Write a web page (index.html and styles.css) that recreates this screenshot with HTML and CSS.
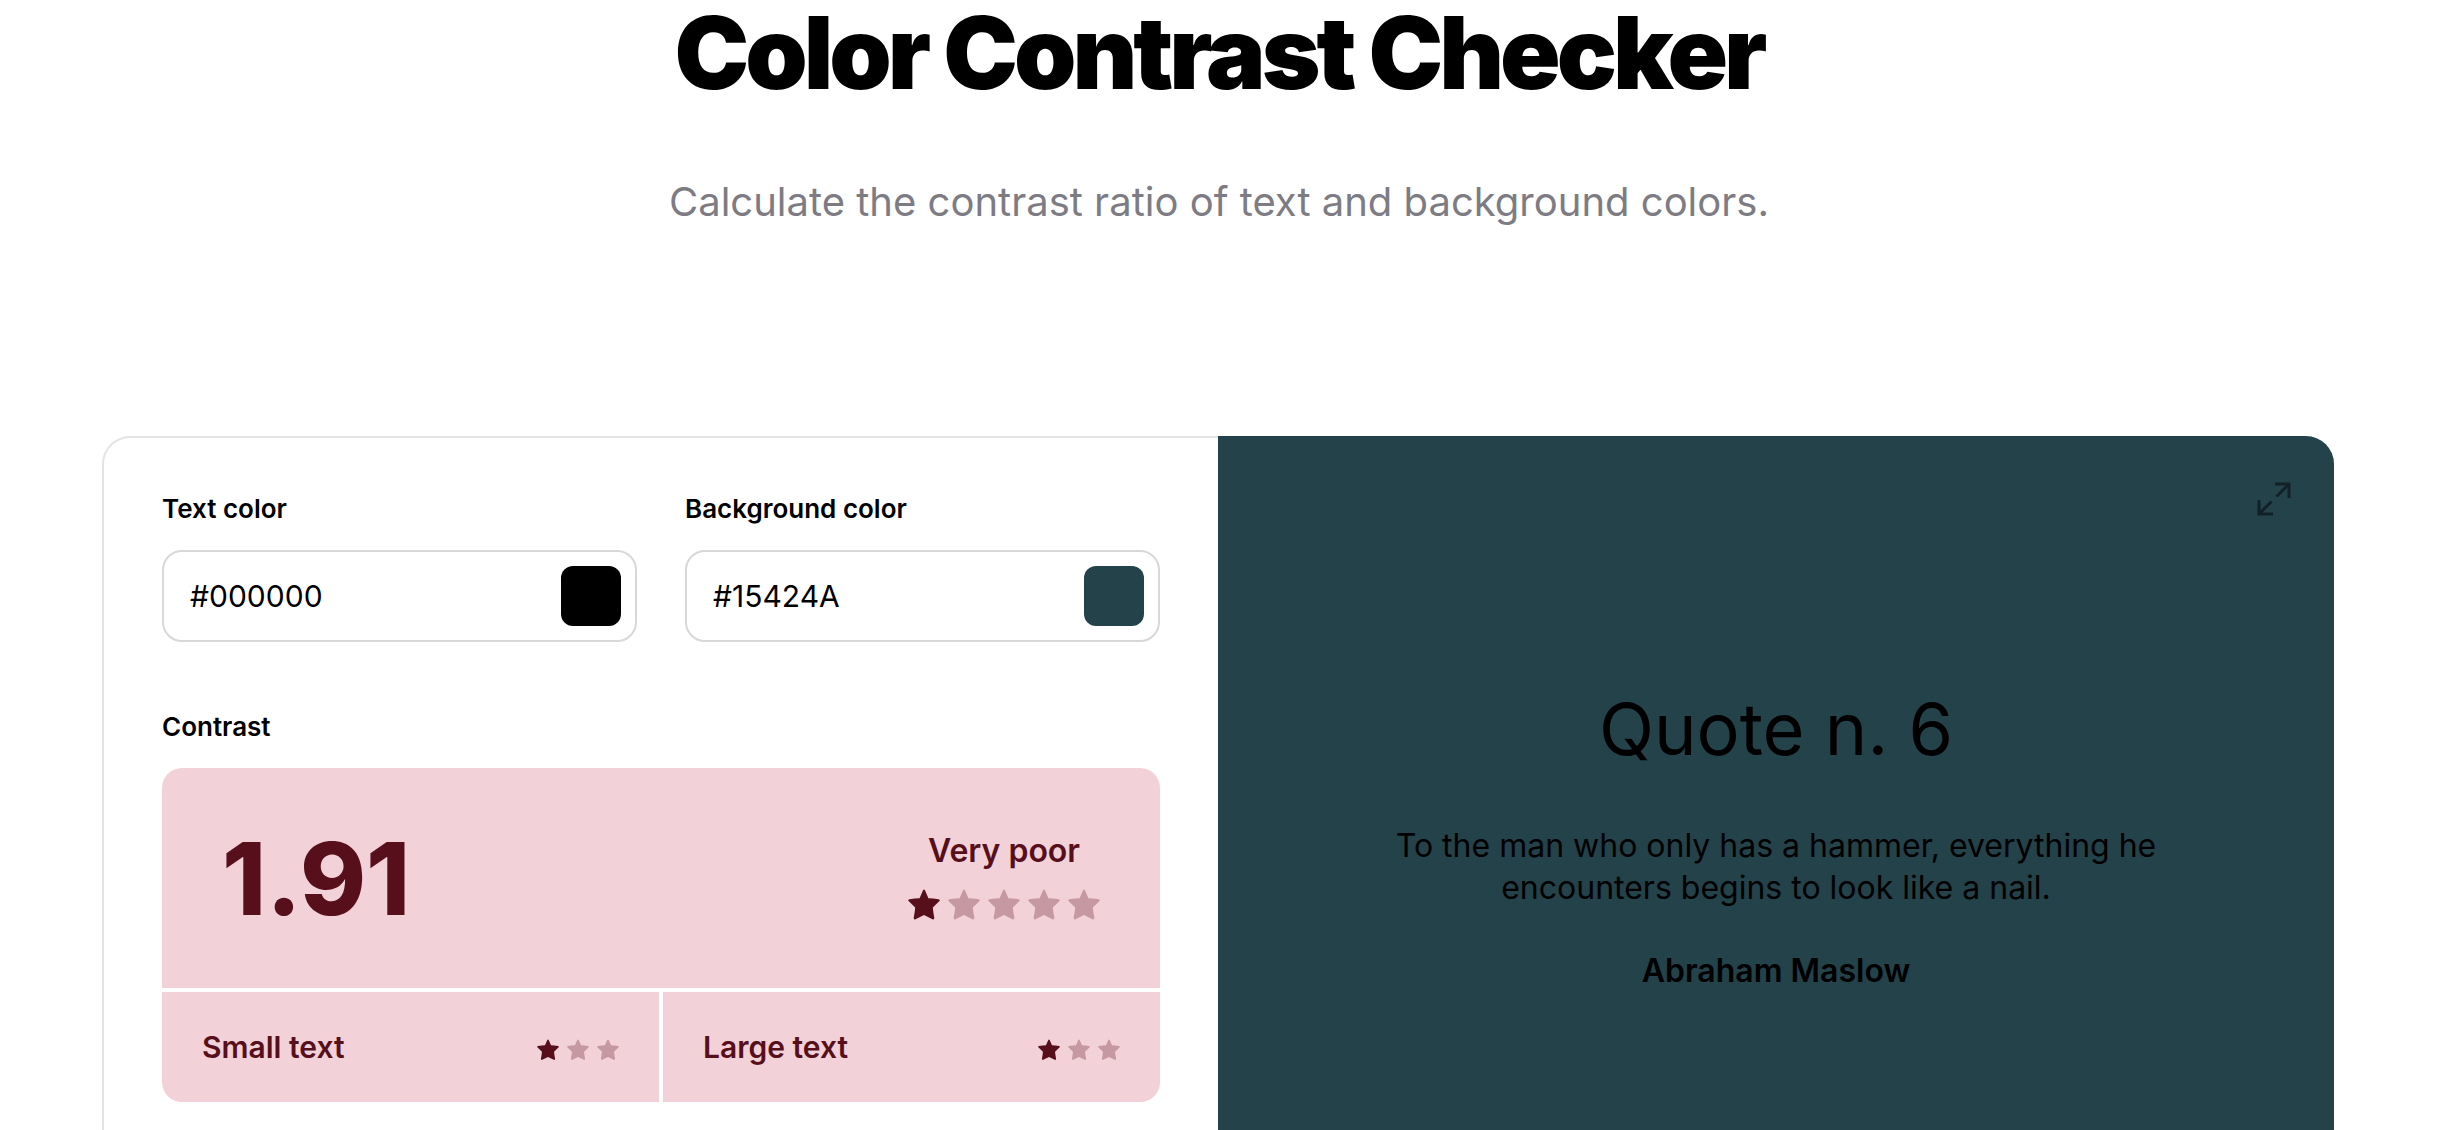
FILE: index.html
```html
<!DOCTYPE html>
<html lang="en">
<head>
    <meta charset="UTF-8">
    <meta name="viewport" content="width=device-width, initial-scale=1.0">
    <title>Color Contrast Checker</title>
    <link rel="stylesheet" href="styles.css">
</head>
<body>
    <svg class="sprite" aria-hidden="true">
        <symbol id="star" viewBox="0 0 32 32">
            <path d="M14.8 1.8Q16 -0.6 17.2 1.8L20.4 9.2Q25 9.4 30.6 10.2Q32.6 10.7 31.2 12.3L24.8 18.4Q25.2 23 26.3 28.8Q26.3 31 24.4 30.2L16 26L7.6 30.2Q5.7 31 5.7 28.8Q6.8 23 7.2 18.4L0.8 12.3Q-0.6 10.7 1.4 10.2Q7 9.4 11.6 9.2Z"/>
        </symbol>
    </svg>

    <header class="header">
        <h1>Color Contrast Checker</h1>
        <p class="subtitle">Calculate the contrast ratio of text and background colors.</p>
    </header>

    <main class="checker">
        <section class="settings">
            <div class="fields">
                <div class="field">
                    <label for="textColor">Text color</label>
                    <div class="color-input">
                        <input type="text" id="textColor" value="#000000">
                        <button type="button" class="swatch swatch-text" aria-label="Pick text color"></button>
                    </div>
                </div>
                <div class="field">
                    <label for="backgroundColor">Background color</label>
                    <div class="color-input">
                        <input type="text" id="backgroundColor" value="#15424A">
                        <button type="button" class="swatch swatch-background" aria-label="Pick background color"></button>
                    </div>
                </div>
            </div>

            <h2>Contrast</h2>
            <div class="result">
                <div class="score">
                    <span class="ratio">1.91</span>
                    <div class="rating">
                        <span class="rating-label">Very poor</span>
                        <div class="stars stars-large">
                            <svg class="star on"><use href="#star"/></svg>
                            <svg class="star"><use href="#star"/></svg>
                            <svg class="star"><use href="#star"/></svg>
                            <svg class="star"><use href="#star"/></svg>
                            <svg class="star"><use href="#star"/></svg>
                        </div>
                    </div>
                </div>
                <div class="detail">
                    <span>Small text</span>
                    <div class="stars">
                        <svg class="star on"><use href="#star"/></svg>
                        <svg class="star"><use href="#star"/></svg>
                        <svg class="star"><use href="#star"/></svg>
                    </div>
                </div>
                <div class="detail">
                    <span>Large text</span>
                    <div class="stars">
                        <svg class="star on"><use href="#star"/></svg>
                        <svg class="star"><use href="#star"/></svg>
                        <svg class="star"><use href="#star"/></svg>
                    </div>
                </div>
            </div>
        </section>

        <section class="preview">
            <button type="button" class="expand" aria-label="Full screen">
                <svg viewBox="0 0 34 34" fill="none" stroke="currentColor" stroke-width="3">
                    <path d="M18 2H32V16M32 2L19.5 14.5M2 18V32H16M2 32L14.5 19.5"/>
                </svg>
            </button>
            <h2 class="quote-title">Quote n. 6</h2>
            <p class="quote">To the man who only has a hammer, everything he encounters begins to look like a nail.</p>
            <p class="author">Abraham Maslow</p>
        </section>
    </main>
</body>
</html>
```

FILE: styles.css
```css
* {
    box-sizing: border-box;
}

body {
    font-family: Inter, "Liberation Sans", sans-serif;
    background-color: #fff;
    color: #000;
    margin: 0;
}

h1, h2, p {
    margin: 0;
}

button {
    border: none;
    padding: 0;
    cursor: pointer;
}

.sprite {
    display: block;
    width: 0;
    height: 0;
}

.header {
    text-align: center;
    padding-bottom: 206px;
}

h1 {
    font-size: 100px;
    font-weight: 900;
    line-height: 106px;
    letter-spacing: -4px;
}

.subtitle {
    margin-top: 68px;
    font-size: 40px;
    line-height: 56px;
    color: #7d7c84;
}

.checker {
    display: grid;
    grid-template-columns: repeat(2, minmax(0, 1fr));
    margin: 0 104px 0 102px;
}

.settings {
    border: 2px solid #e4e4e4;
    border-right: none;
    border-radius: 28px 0 0 28px;
    padding: 54px 58px 136px;
}

.fields {
    display: grid;
    grid-template-columns: repeat(2, minmax(0, 1fr));
    gap: 48px;
    margin-bottom: 68px;
}

label, .settings h2 {
    display: block;
    font-size: 26px;
    font-weight: 600;
    line-height: 34px;
}

.settings h2 {
    margin-bottom: 24px;
}

.color-input {
    display: flex;
    align-items: center;
    height: 92px;
    margin-top: 24px;
    padding: 0 14px 0 26px;
    border: 2px solid #d8d8d8;
    border-radius: 20px;
}

.color-input input {
    flex: 1;
    min-width: 0;
    padding: 0;
    border: none;
    outline: none;
    background: none;
    font: inherit;
    font-size: 30px;
    color: #000;
}

.swatch {
    width: 60px;
    height: 60px;
    border-radius: 12px;
}

.swatch-text {
    background-color: #000;
}

.swatch-background {
    background-color: #24424a;
}

.result {
    display: grid;
    grid-template-columns: repeat(2, minmax(0, 1fr));
    gap: 4px;
    border-radius: 20px;
    overflow: hidden;
    color: #57101b;
    font-weight: 600;
}

.score, .detail {
    display: flex;
    align-items: center;
    justify-content: space-between;
    background-color: #f3d1d8;
}

.score {
    grid-column: 1 / 3;
    height: 220px;
    padding: 0 60px;
}

.ratio {
    font-size: 100px;
    font-weight: 800;
}

.rating {
    display: flex;
    flex-direction: column;
    align-items: center;
    gap: 16px;
    padding-bottom: 6px;
}

.rating-label {
    font-size: 32px;
    line-height: 44px;
}

.detail {
    height: 110px;
    padding: 0 40px;
    font-size: 30px;
}

.stars {
    display: flex;
    gap: 8px;
}

.detail .stars {
    padding-top: 6px;
}

.star {
    width: 22px;
    height: 22px;
    fill: #c698a2;
}

.star.on {
    fill: #57101b;
}

.stars-large .star {
    width: 32px;
    height: 32px;
}

.preview {
    position: relative;
    display: flex;
    flex-direction: column;
    align-items: center;
    justify-content: center;
    padding: 60px 160px;
    border-radius: 0 28px 28px 0;
    background-color: #24424a;
    text-align: center;
}

.expand {
    position: absolute;
    top: 46px;
    right: 43px;
    width: 34px;
    height: 34px;
    background: none;
    color: #122127;
}

.expand svg {
    display: block;
}

.quote-title {
    font-size: 72px;
    font-weight: 400;
    line-height: 88px;
}

.quote {
    margin-top: 52px;
    font-size: 32px;
    line-height: 42px;
}

.author {
    margin-top: 41px;
    font-size: 32px;
    font-weight: 600;
    line-height: 42px;
}
```
